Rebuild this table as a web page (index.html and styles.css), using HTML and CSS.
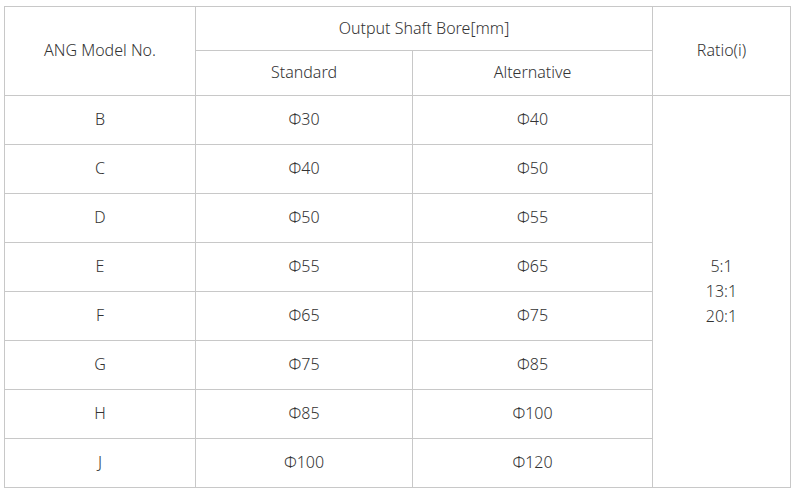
FILE: index.html
```html
<!DOCTYPE html>
<html>
<head>
<meta charset="utf-8">
<link rel="stylesheet" href="styles.css">
</head>
<body>
<table class="spec">
  <colgroup>
    <col class="c1"><col class="c2"><col class="c3"><col class="c4">
  </colgroup>
  <tr class="h1">
    <td rowspan="2">ANG Model No.</td>
    <td colspan="2">Output Shaft Bore[mm]</td>
    <td rowspan="2">Ratio(i)</td>
  </tr>
  <tr class="h2">
    <td>Standard</td>
    <td>Alternative</td>
  </tr>
  <tr class="row"><td>B</td><td>Φ30</td><td>Φ40</td><td rowspan="8" class="ratio">5:1<br>13:1<br>20:1</td></tr>
  <tr class="row"><td>C</td><td>Φ40</td><td>Φ50</td></tr>
  <tr class="row"><td>D</td><td>Φ50</td><td>Φ55</td></tr>
  <tr class="row"><td>E</td><td>Φ55</td><td>Φ65</td></tr>
  <tr class="row"><td>F</td><td>Φ65</td><td>Φ75</td></tr>
  <tr class="row"><td>G</td><td>Φ75</td><td>Φ85</td></tr>
  <tr class="row"><td>H</td><td>Φ85</td><td>Φ100</td></tr>
  <tr class="row last"><td>J</td><td>Φ100</td><td>Φ120</td></tr>
</table>
</body>
</html>
```
FILE: styles.css
```css
html, body {
  margin: 0;
  background: #ffffff;
}
body {
  padding: 6px 0 0 4px;
  font-family: "Noto Sans", "Noto Sans CJK SC", sans-serif;
  font-size: 16px;
  font-weight: 300;
  color: #333333;
}
.spec {
  border-collapse: collapse;
  table-layout: fixed;
  width: 786px;
}
.c1 { width: 191px; }
.c2 { width: 217px; }
.c3 { width: 240px; }
.c4 { width: 138px; }
.spec td {
  border: 1px solid #c8c8c8;
  text-align: center;
  vertical-align: middle;
  padding: 0 0 2px;
  line-height: 20px;
}
.h1 td { height: 41px; }
.h2 td { height: 42px; }
.row td { height: 46px; }
.row.last td { height: 46px; }
.spec td.ratio { line-height: 25px; padding: 0; }
```
